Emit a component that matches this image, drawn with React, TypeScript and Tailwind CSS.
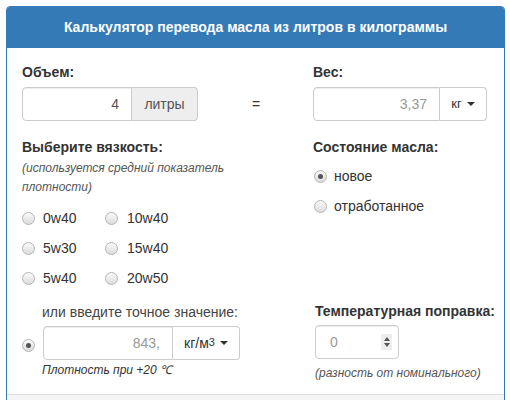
const Radio = ({ checked = false }: { checked?: boolean }) => (
  <span className="inline-flex h-[13px] w-[13px] shrink-0 items-center justify-center rounded-full border border-[#b4b4b4] bg-gradient-to-b from-[#fbfbfb] to-[#dcdcdc]">
    {checked && <span className="h-[5px] w-[5px] rounded-full bg-[#555]" />}
  </span>
);

const Caret = () => (
  <span className="ml-[5px] inline-block h-0 w-0 border-x-[4px] border-t-[4px] border-x-transparent border-t-[#333] align-middle" />
);

const viscosities = [
  ["0w40", "10w40"],
  ["5w30", "15w40"],
  ["5w40", "20w50"],
];

const App = () => {
  return (
    <div className="h-[400px] overflow-hidden bg-white pt-[6px] pl-[6px] font-['Liberation_Sans',Arial,sans-serif] text-[14px] text-[#333]">
      <div className="w-[499px] overflow-hidden rounded-t-[4px] border border-[#337ab7]">
        {/* Header */}
        <div className="flex h-[41px] items-center justify-center bg-[#337ab7] text-[14px] font-bold text-white">
          Калькулятор перевода масла из литров в килограммы
        </div>

        {/* Body */}
        <div className="grid grid-cols-[291px_176px] px-[15px] pt-[14px] pb-[12px]">
          {/* Left column */}
          <div className="flex flex-col">
            <div className="h-5 font-bold leading-5">Объем:</div>
            <div className="mt-[5px] flex items-center">
              <div className="flex h-[34px] w-[176px]">
                <div className="flex w-[110px] items-center justify-end rounded-l-[4px] border border-[#ccc] px-3 text-[#555] shadow-[inset_0_1px_1px_rgba(0,0,0,0.075)]">
                  4
                </div>
                <div className="flex w-[66px] items-center justify-center rounded-r-[4px] border border-l-0 border-[#ccc] bg-[#eee] text-[#555]">
                  литры
                </div>
              </div>
              <div className="ml-[54px] text-[#333]">=</div>
            </div>

            <div className="mt-4 h-5 font-bold leading-5">Выберите вязкость:</div>
            <div className="mt-[2px] text-[12px] italic leading-[19px] text-[#555]">
              (используется средний показатель
              <br />
              плотности)
            </div>

            <div className="mt-[6px] flex flex-col">
              {viscosities.map((row) => (
                <div key={row[0]} className="flex h-[30px] items-center">
                  <div className="flex w-[83px] items-center gap-2">
                    <Radio />
                    <span>{row[0]}</span>
                  </div>
                  <div className="flex items-center gap-[9px]">
                    <Radio />
                    <span>{row[1]}</span>
                  </div>
                </div>
              ))}
            </div>

            <div className="mt-[9px] h-5 pl-[20px] leading-5 text-[#444]">или введите точное значение:</div>
            <div className="mt-1 flex items-center">
              <div className="w-[21px]">
                <Radio checked />
              </div>
              <div className="flex h-[34px] w-[197px]">
                <div className="flex w-[130px] items-center justify-end rounded-l-[4px] border border-[#ccc] px-3 text-[#999] shadow-[inset_0_1px_1px_rgba(0,0,0,0.075)]">
                  843,
                </div>
                <div className="flex flex-1 items-center justify-center rounded-r-[4px] border border-l-0 border-[#ccc] bg-white text-[#333]">
                  кг/м<sup className="relative -top-[1px] text-[11px]">3</sup>
                  <Caret />
                </div>
              </div>
            </div>
            <div className="mt-[2px] pl-[20px] text-[12px] italic leading-[17px] text-[#333]">Плотность при +20 ℃</div>
          </div>

          {/* Right column */}
          <div className="flex flex-col">
            <div className="h-5 font-bold leading-5">Вес:</div>
            <div className="mt-[5px] flex h-[34px] w-[174px]">
              <div className="flex w-[127px] items-center justify-end rounded-l-[4px] border border-[#ccc] px-3 text-[#999] shadow-[inset_0_1px_1px_rgba(0,0,0,0.075)]">
                3,37
              </div>
              <div className="flex flex-1 items-center justify-center rounded-r-[4px] border border-l-0 border-[#ccc] bg-white text-[13px]">
                кг
                <Caret />
              </div>
            </div>

            <div className="mt-4 h-5 font-bold leading-5">Состояние масла:</div>
            <div className="mt-1 flex flex-col">
              <div className="flex h-[30px] items-center gap-[7px] pl-[1px]">
                <Radio checked />
                <span>новое</span>
              </div>
              <div className="flex h-[30px] items-center gap-[7px] pl-[1px]">
                <Radio />
                <span>отработанное</span>
              </div>
            </div>

            <div className="mt-[80px] h-5 pl-[2px] font-bold leading-5 whitespace-nowrap">Температурная поправка:</div>
            <div className="mt-[4px] ml-[2px] flex h-[34px] w-[84px] items-center justify-between rounded-[4px] border border-[#ccc] pr-[6px] pl-[14px] text-[#999] shadow-[inset_0_1px_1px_rgba(0,0,0,0.075)]">
              <span>0</span>
              <span className="flex h-[16px] w-[11px] flex-col items-center justify-center gap-[2px] bg-[#eee]">
                <span className="h-0 w-0 border-x-[3px] border-b-[4px] border-x-transparent border-b-[#555]" />
                <span className="h-0 w-0 border-x-[3px] border-t-[4px] border-x-transparent border-t-[#555]" />
              </span>
            </div>
            <div className="mt-[6px] pl-[2px] text-[12px] italic leading-[17px] text-[#555] whitespace-nowrap">
              (разность от номинального)
            </div>
          </div>
        </div>

        {/* Footer */}
        <div className="h-[10px] border-t border-[#ddd] bg-[#f5f5f5]" />
      </div>
    </div>
  );
};

export default App;
